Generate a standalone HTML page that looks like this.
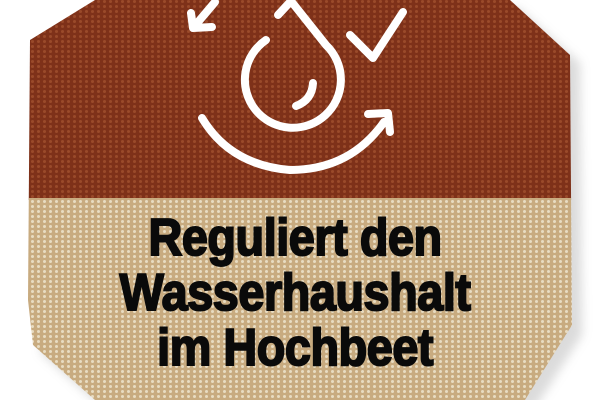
<!DOCTYPE html>
<html><head><meta charset="utf-8"><style>
html,body{margin:0;padding:0;background:#fff;width:612px;height:400px;overflow:hidden}
.t{position:absolute;left:0;width:590px;text-align:center;font-family:"Liberation Sans",sans-serif;font-weight:bold;font-size:52px;line-height:57px;color:#0a0a0a;transform:scaleX(0.9);transform-origin:296px 0;-webkit-text-stroke:2px #0a0a0a;letter-spacing:-0.5px}
</style></head><body>
<svg width="612" height="400" style="position:absolute;left:0;top:0">
<defs>
<pattern id="wb" width="6" height="5" patternUnits="userSpaceOnUse"><rect width="6" height="5" fill="#7e3119"/><rect x="1" y="0" width="3" height="3" rx="1.5" fill="#9a4a2a"/></pattern>
<pattern id="wl" width="6" height="5" patternUnits="userSpaceOnUse"><rect width="6" height="5" fill="#c8ab80"/><rect x="1" y="0" width="3" height="3" rx="1.5" fill="#e8dcc2"/></pattern>
<clipPath id="cp"><polygon points="30,40 95,0 510,0 570,55 572,325 525,400 95,400 33,345 28,300"/></clipPath>
<filter id="sh"><feGaussianBlur stdDeviation="5"/></filter>
</defs>
<polygon points="38,50 103,8 518,8 580,63 582,335 535,408 103,408 41,353" fill="#999" opacity="0.35" filter="url(#sh)"/>
<g clip-path="url(#cp)">
<rect x="0" y="0" width="612" height="200" fill="url(#wb)"/>
<rect x="0" y="198" width="612" height="210" fill="url(#wl)"/>
</g>
<g fill="none" stroke="#fff" stroke-width="8" stroke-linecap="round" stroke-linejoin="round">
<path d="M215,2 L193,28 M191,13 L193,28 L212,27"/>
<path d="M278,15 L291,1 L326,45 A48,48 0 1 1 266,40"/>
<path d="M313,83 Q312,100 296,106"/>
<path d="M202,118 Q230,165 290,170 Q350,170 384,122 M368,114 L388,113 L390,132"/>
<path d="M350,35 L373,58 L403,12"/>
</g>
</svg>
<div class="t" style="top:210px">Reguliert den</div>
<div class="t" style="top:265px">Wasserhaushalt</div>
<div class="t" style="top:320px">im Hochbeet</div>
</body></html>
